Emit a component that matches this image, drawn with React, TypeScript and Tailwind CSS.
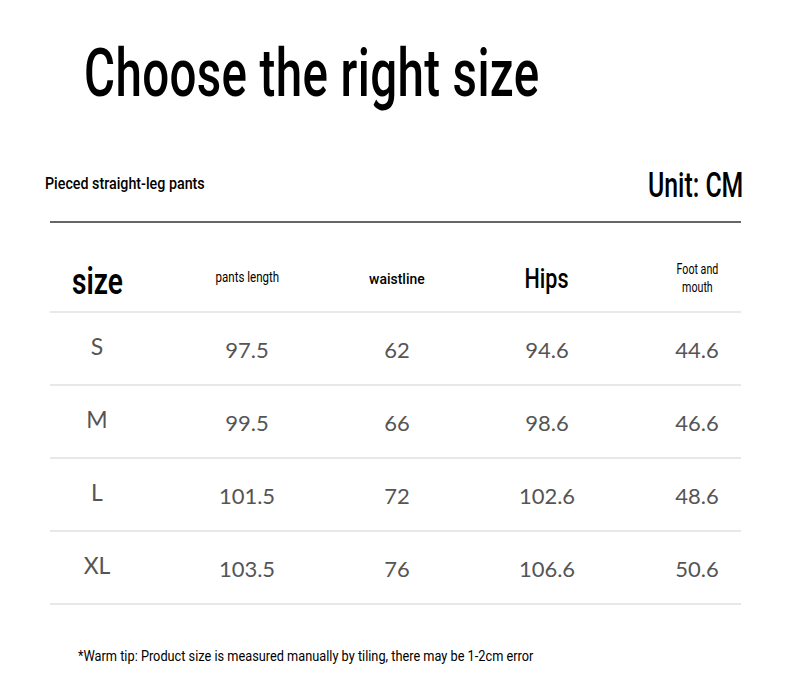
const rows = [
  ['S', '97.5', '62', '94.6', '44.6'],
  ['M', '99.5', '66', '98.6', '46.6'],
  ['L', '101.5', '72', '102.6', '48.6'],
  ['XL', '103.5', '76', '106.6', '50.6'],
]

// condensed look: Roboto squeezed horizontally
function Cond({ className, children }: { className: string; children: React.ReactNode }) {
  return <span className={`inline-block whitespace-nowrap font-['Roboto',sans-serif] ${className}`}>{children}</span>
}

export default function App() {
  return (
    <div className="w-[790px] h-[697px] bg-white text-black overflow-hidden">
      {/* Title */}
      <div className="pt-[34px] pl-[84px] h-[130px]">
        <Cond className="origin-left scale-x-[0.72] text-[66px] leading-[80px] font-medium tracking-[0.5px]">
          Choose the right size
        </Cond>
      </div>

      {/* Product + unit */}
      <div className="mt-[36px] ml-[45px] mr-[47px] flex items-end justify-between">
        <Cond className="origin-left scale-x-[0.84] text-[17px] leading-[20px] font-medium mb-[13px]">
          Pieced straight-leg pants
        </Cond>
        <Cond className="origin-right scale-x-[0.71] text-[35px] leading-[40px] font-medium">Unit: CM</Cond>
      </div>
      <div className="mt-[15px] ml-[50px] w-[691px] h-[2px] bg-[#666]" />

      {/* Header */}
      <div className="ml-[50px] w-[691px] border-b-2 border-[#e8e8e8]">
        <div className="-ml-[28px] w-[750px] h-[88px] pt-[24px] grid grid-cols-5 items-center text-center">
          <div className="pt-[6px]">
            <Cond className="scale-x-[0.76] text-[37px] leading-[40px] font-semibold">size</Cond>
          </div>
          <div className="pb-[6px]">
            <Cond className="scale-x-[0.77] text-[15px] leading-[18px]">pants length</Cond>
          </div>
          <div className="pb-[2px]">
            <Cond className="scale-x-[0.93] text-[15px] leading-[18px] font-medium">waistline</Cond>
          </div>
          <div>
            <Cond className="scale-x-[0.77] text-[28px] leading-[32px] font-medium">Hips</Cond>
          </div>
          <div className="pb-[1px]">
            <Cond className="scale-x-[0.76] text-[14px] leading-[18px]">
              Foot and
              <br />
              mouth
            </Cond>
          </div>
        </div>
      </div>

      {/* Rows */}
      {rows.map((r) => (
        <div key={r[0]} className="ml-[50px] w-[691px] border-b-2 border-[#e8e8e8]">
          <div className="-ml-[28px] w-[750px] h-[71px] grid grid-cols-5 items-center text-center font-['Lato',sans-serif] text-[22px] text-[#555]">
            {r.map((v, i) => (
              <span key={i} className={i === 0 ? 'pb-[5px] text-[23px]' : 'pt-[2px]'}>
                {v}
              </span>
            ))}
          </div>
        </div>
      ))}

      {/* Footnote */}
      <div className="mt-[38px] ml-[78px]">
        <Cond className="origin-left scale-x-[0.85] text-[15px] leading-[20px]">
          *Warm tip: Product size is measured manually by tiling, there may be 1-2cm error
        </Cond>
      </div>
    </div>
  )
}
